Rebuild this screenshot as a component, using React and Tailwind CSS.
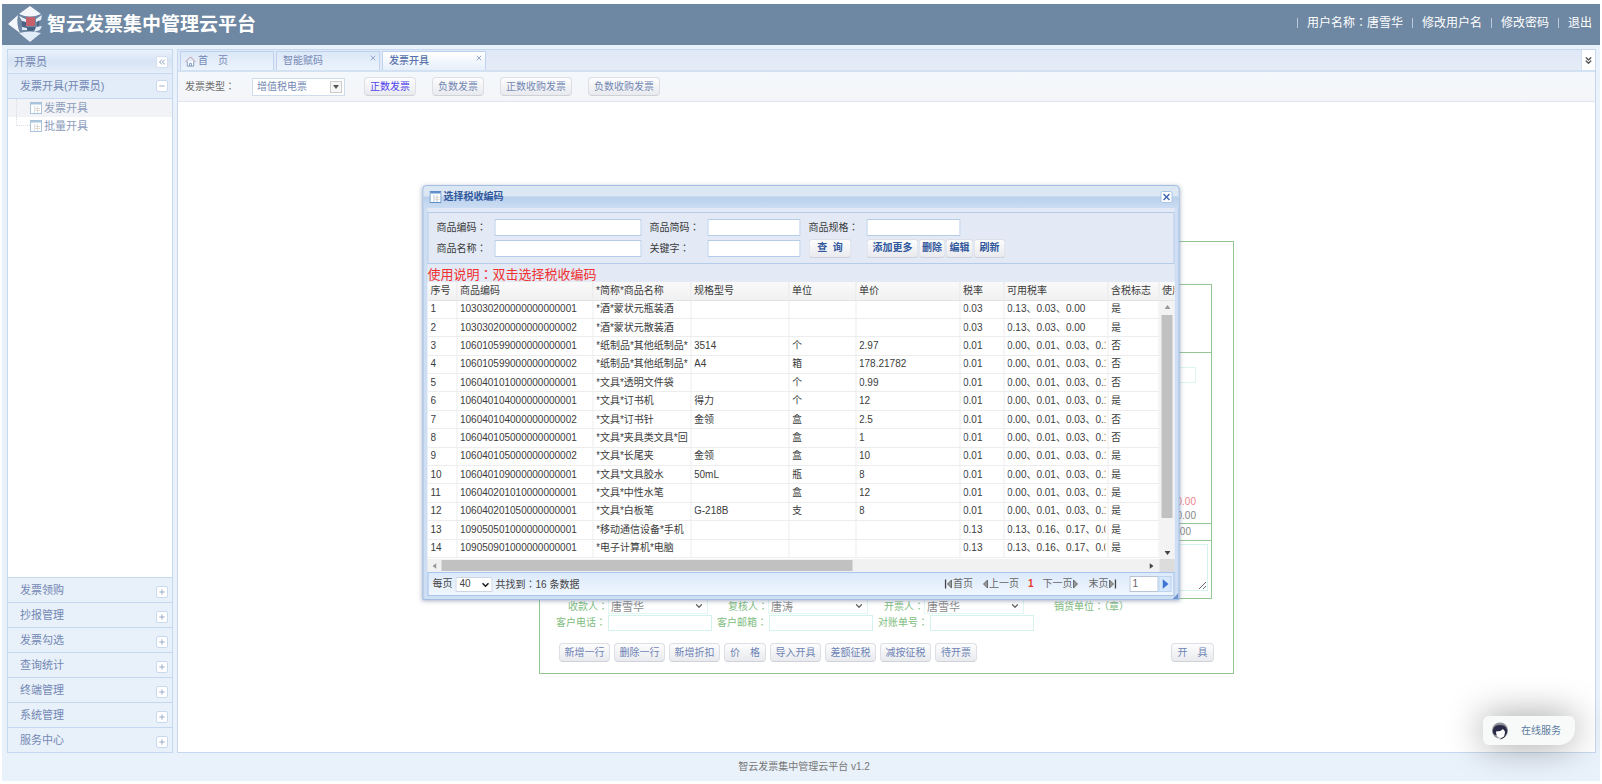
import React, { useState } from 'react';
import { ChevronDown, ChevronsDown, ChevronsLeft, Minus, Plus, X } from 'lucide-react';

const menus = ['发票领购', '抄报管理', '发票勾选', '查询统计', '终端管理', '系统管理', '服务中心'];

const goods = [
    ['1', '103030200000000000001', '*酒*蒙状元瓶装酒', '', '', '', '0.03', '0.13、0.03、0.00', '是'],
    ['2', '103030200000000000002', '*酒*蒙状元散装酒', '', '', '', '0.03', '0.13、0.03、0.00', '是'],
    ['3', '106010599000000000001', '*纸制品*其他纸制品*', '3514', '个', '2.97', '0.01', '0.00、0.01、0.03、0.1', '否'],
    ['4', '106010599000000000002', '*纸制品*其他纸制品*', 'A4', '箱', '178.21782', '0.01', '0.00、0.01、0.03、0.1', '否'],
    ['5', '106040101000000000001', '*文具*透明文件袋', '', '个', '0.99', '0.01', '0.00、0.01、0.03、0.1', '否'],
    ['6', '106040104000000000001', '*文具*订书机', '得力', '个', '12', '0.01', '0.00、0.01、0.03、0.1', '是'],
    ['7', '106040104000000000002', '*文具*订书针', '金领', '盒', '2.5', '0.01', '0.00、0.01、0.03、0.1', '否'],
    ['8', '106040105000000000001', '*文具*夹具类文具*回', '', '盒', '1', '0.01', '0.00、0.01、0.03、0.1', '否'],
    ['9', '106040105000000000002', '*文具*长尾夹', '金领', '盒', '10', '0.01', '0.00、0.01、0.03、0.1', '是'],
    ['10', '106040109000000000001', '*文具*文具胶水', '50mL', '瓶', '8', '0.01', '0.00、0.01、0.03、0.1', '是'],
    ['11', '106040201010000000001', '*文具*中性水笔', '', '盒', '12', '0.01', '0.00、0.01、0.03、0.1', '是'],
    ['12', '106040201050000000001', '*文具*白板笔', 'G-218B', '支', '8', '0.01', '0.00、0.01、0.03、0.1', '是'],
    ['13', '109050501000000000001', '*移动通信设备*手机', '', '', '', '0.13', '0.13、0.16、0.17、0.0', '是'],
    ['14', '109050901000000000001', '*电子计算机*电脑', '', '', '', '0.13', '0.13、0.16、0.17、0.0', '是'],
];

const columns = [
    { title: '序号', width: 'w-[29px]' },
    { title: '商品编码', width: 'w-[136px]' },
    { title: '*简称*商品名称', width: 'w-[98px]' },
    { title: '规格型号', width: 'w-[98px]' },
    { title: '单位', width: 'w-[67px]' },
    { title: '单价', width: 'w-[104px]' },
    { title: '税率', width: 'w-[44px]' },
    { title: '可用税率', width: 'w-[104px]' },
    { title: '含税标志', width: 'w-[51px]' },
    { title: '使用', width: 'w-[16px]' },
];

// full-width colon centred in its box
const Colon = () => <span className="font-['Noto_Sans_CJK_TC',sans-serif]">：</span>;

function Logo() {
    return (
        <svg viewBox="0 0 36 38" className="h-[38px] w-9 shrink-0" aria-hidden="true">
            <path d="M22 0 L33 8 Q22 13 11 8 Z" fill="#f3f7fc" />
            <path d="M10 9 L0 18 L12 27 Q8 18 10 9 Z" fill="#f3f7fc" />
            <path d="M22 36 L11 27 Q22 24 33 27 Z" fill="#e2ecf9" />
            <path d="M15 11 Q12 18 16 23 Q22 27 29 23 Q32 20 31 12 L29 12 V21 H18 V12 Z" fill="#4a6183" />
            <path d="M11 10 L18 13 V16 L14 15 Z M34 9 L28 13 V16 L33 14 Z" fill="#e6eefa" />
            <path d="M28 21 L34 20 L32 24 L26 26 Z M14 21 L19 22 V24 L14 24 Z" fill="#dfe9f7" />
            <rect x="18" y="11" width="9" height="9" rx="1" fill="#c65f6c" />
        </svg>
    );
}

function GridIcon({ tone }) {
    return (
        <svg viewBox="0 0 12 12" className="h-3 w-3 shrink-0" aria-hidden="true">
            <rect x="0.5" y="0.5" width="11" height="11" fill="#fff" stroke={tone} />
            <path d="M1 1.500 h10" stroke={tone} strokeWidth="2" />
            <path d="M4.500 4 v7 M7.500 4 v7" stroke={tone} strokeOpacity="0.6" strokeWidth="0.8" />
            <path d="M5 6.500 h5 M5 8.500 h5" stroke="#e3d3bd" strokeWidth="0.8" />
        </svg>
    );
}

function Arrow({ left, bar }) {
    return (
        <svg viewBox="0 0 8 10" className="h-[10px] w-2" aria-hidden="true">
            <g transform={left ? undefined : 'translate(8 0) scale(-1 1)'}>
                {bar && <path d="M1 0.5 v9" stroke="#444" strokeWidth="1.4" />}
                <path d="M7 1 v8 L3 5 Z" fill="#999" stroke="#555" strokeWidth="0.8" />
            </g>
        </svg>
    );
}

function ToolButton({ children, className }) {
    return (
        <button
            type="button"
            className={`h-[19px] shrink-0 rounded-sm border border-[#dcdfe6] border-b-[#cfd2d8] bg-linear-to-b from-[#fdfdfd] to-[#e9eaee] text-center whitespace-pre ${className}`}
        >
            {children}
        </button>
    );
}

function PersonSelect({ id, label, name, className }) {
    return (
        <div className={`flex items-center ${className}`}>
            <label htmlFor={id} className="w-[52px] shrink-0 text-right text-[#80bd80]">{label}<Colon /></label>
            <div className="relative w-[100px] shrink-0">
                <select id={id} className="block h-[15px] w-full appearance-none border border-[#e0f6f1] bg-white pl-0.5 text-[11px] leading-3 text-[#8b8b8b]">
                    <option>{name}</option>
                </select>
                <ChevronDown className="pointer-events-none absolute top-0.5 right-1 h-[10px] w-[10px] text-[#666]" strokeWidth={3} />
            </div>
        </div>
    );
}

function TextField({ id, label }) {
    return (
        <div className="flex items-center">
            <label htmlFor={id} className="w-[52px] shrink-0 text-[#80bd80]">{label}<Colon /></label>
            <input id={id} type="text" className="h-4 w-[104px] shrink-0 border border-[#d3f3ee] bg-white px-1" />
        </div>
    );
}

function Sidebar() {
    return (
        <aside className="flex w-[166px] shrink-0 flex-col border border-[#c6d8ef] bg-white text-[11px] text-[#7388b3]">
            <div className="flex h-6 shrink-0 items-center justify-between border-b border-[#c6d8ef] bg-linear-to-b from-[#e9f1fb] via-[#d8e4f4] to-[#e6effa] pr-1 pl-1.5">
                <span>开票员</span>
                <button type="button" aria-label="折叠" className="flex h-3 w-3 items-center justify-center rounded-xs border border-[#d3dfef] bg-white">
                    <ChevronsLeft className="h-[10px] w-[10px]" />
                </button>
            </div>
            <div className="flex h-[25px] shrink-0 items-center justify-between border-b border-[#c6d8ef] bg-[#e3edf9] pr-1 pl-3">
                <span>发票开具(开票员)</span>
                <button type="button" aria-label="收起" className="flex h-3 w-3 items-center justify-center rounded-xs border border-[#c9d9ee] bg-white">
                    <Minus className="h-2 w-2" />
                </button>
            </div>
            <ul className="min-h-0 flex-1 text-[#8d9dbd]">
                <li className="flex h-[18px] items-center bg-[#f1f3f6] pl-2">
                    <span className="h-full w-3.5 border-l border-dotted border-[#d8dde6]" />
                    <GridIcon tone="#a9c4dc" />
                    <a href="#invoice" className="ml-0.5">发票开具</a>
                </li>
                <li className="flex h-[18px] items-center pl-2">
                    <span className="w-3.5 self-start border-b border-l border-dotted border-[#d8dde6] pt-2" />
                    <GridIcon tone="#a9c4dc" />
                    <a href="#batch" className="ml-0.5">批量开具</a>
                </li>
            </ul>
            {menus.map((menu) => (
                <div key={menu} className="flex h-[25px] shrink-0 items-center justify-between border-t border-[#c6d8ef] bg-[#e8f0fa] pr-1 pl-3">
                    <span>{menu}</span>
                    <button type="button" aria-label={`展开${menu}`} className="mt-1 flex h-3 w-3 items-center justify-center rounded-xs border border-[#c9d9ee] bg-white">
                        <Plus className="h-2 w-2" />
                    </button>
                </div>
            ))}
        </aside>
    );
}

function InvoiceForm() {
    return (
        <section className="mx-auto mt-[139px] flex h-[433px] w-[695px] shrink-0 flex-col border border-[#95c795] bg-white pt-[42px]">
            <div className="mx-[21px] flex h-[315px] flex-col border border-[#95c795] text-right">
                <div className="h-[68px] border-b border-[#95c795]" />
                <div className="flex flex-1 flex-col justify-between pt-[14px] pr-[15px]">
                    <input type="text" aria-label="金额" className="h-4 w-24 self-end border border-[#dff5f1]" />
                    <div className="leading-[14px]">
                        <p className="text-[#f0848c]">0.00</p>
                        <p className="text-[#888]">0.00</p>
                    </div>
                </div>
                <p className="h-[18px] border-y border-[#95c795] pr-5 leading-4 text-[#888]">0.00</p>
                <div className="h-[57px] p-[3px]">
                    <textarea aria-label="备注" className="block h-[47px] w-full border border-[#d3f3ee]" />
                </div>
            </div>
            <div className="flex h-[15px] shrink-0 items-center pl-4">
                <PersonSelect id="payee" label="收款人" name="唐雪华" />
                <PersonSelect id="checker" label="复核人" name="唐涛" className="ml-2" />
                <PersonSelect id="drawer" label="开票人" name="唐雪华" className="ml-1" />
                <span className="ml-[30px] whitespace-nowrap text-[#80bd80]">销货单位<Colon />（章）</span>
            </div>
            <div className="flex shrink-0 items-center gap-[5px] pl-4">
                <TextField id="phone" label="客户电话" />
                <TextField id="mail" label="客户邮箱" />
                <TextField id="bill" label="对账单号" />
            </div>
            <div className="mt-3 flex shrink-0 gap-1 px-[19px] text-[#6e84b5]">
                <ToolButton className="w-[51px]">新增一行</ToolButton>
                <ToolButton className="w-[51px]">删除一行</ToolButton>
                <ToolButton className="w-[51px]">新增折扣</ToolButton>
                <ToolButton className="w-[42px]">价　格</ToolButton>
                <ToolButton className="w-[51px]">导入开具</ToolButton>
                <ToolButton className="w-[51px]">差额征税</ToolButton>
                <ToolButton className="w-[51px]">减按征税</ToolButton>
                <ToolButton className="w-[42px]">待开票</ToolButton>
                <ToolButton className="ml-auto w-[43px]">开　具</ToolButton>
            </div>
        </section>
    );
}

function GoodsTable() {
    return (
        <div className="relative h-[277px] overflow-hidden bg-white">
            <table className="h-[276px] w-full table-fixed border-collapse text-left leading-3 text-[#3c3c3c]">
                <thead>
                    <tr className="h-[18px] bg-linear-to-b from-[#fafafa] to-[#f0f1f2]">
                        {columns.map((col) => (
                            <th key={col.title} className={`${col.width} overflow-hidden border-r border-b border-[#e2e2e2] p-0 pl-[3px] font-normal whitespace-nowrap last:border-r-0`}>
                                {col.title}
                            </th>
                        ))}
                    </tr>
                </thead>
                <tbody>
                    {goods.map((row) => (
                        <tr key={row[1]}>
                            {row.map((cell, i) => (
                                <td key={i} className="border-r border-b border-[#ededed] p-0 pl-[3px] whitespace-nowrap">
                                    <div className="mr-0.5 overflow-hidden">{cell}</div>
                                </td>
                            ))}
                            <td className="p-0" />
                        </tr>
                    ))}
                </tbody>
            </table>
            {/* vertical scroll bar over the last column */}
            <div className="absolute top-[19px] right-0 bottom-0 flex w-[15px] flex-col items-center justify-between bg-[#f3f3f3] py-1">
                <svg viewBox="0 0 6 4" className="h-1 w-1.5"><path d="M0 4 L3 0 L6 4 Z" fill="#999" /></svg>
                <div className="mb-auto mt-1.5 h-[203px] w-[11px] bg-[#c1c1c1]" />
                <svg viewBox="0 0 6 4" className="h-1 w-1.5"><path d="M0 0 L3 4 L6 0 Z" fill="#444" /></svg>
            </div>
        </div>
    );
}

function CodeDialog({ onClose }) {
    const [pageSize, setPageSize] = useState('40');
    const inputClass = 'h-[17px] border border-[#b5cde9] bg-white px-1';

    return (
        <div role="dialog" aria-label="选择税收编码" className="absolute top-[185px] left-1/2 flex w-[757px] -translate-x-1/2 flex-col rounded-t border border-[#a3bfe3] bg-[#cfdff3] px-1 pb-[3px] shadow-[0_1px_4px_rgba(80,100,140,0.5)]">
            <div className="-mx-1 flex h-[22px] items-center rounded-t bg-linear-to-b from-[#dbe7f3] from-45% via-[#b9d0ec] via-50% to-[#cbddf3] px-1.5 font-bold text-[#31589c]">
                <GridIcon tone="#5f8fc9" />
                <h2 className="ml-0.5">选择税收编码</h2>
                <button type="button" aria-label="关闭" onClick={onClose} className="ml-auto flex h-3 w-3 items-center justify-center rounded-xs border border-[#aac4e4] bg-white">
                    <X className="h-[10px] w-[10px] text-[#4a6cb0]" strokeWidth={4} />
                </button>
            </div>
            <div className="bg-[#e3eaf5] pt-1">
                <form className="flex h-[52px] flex-col justify-center gap-[3px] border border-[#b5cbea] pl-2 text-[#3a3a3a]">
                    <div className="flex items-center">
                        <label htmlFor="code" className="w-[58px]">商品编码<Colon /></label>
                        <input id="code" type="text" className={`${inputClass} w-[147px]`} />
                        <label htmlFor="short" className="ml-2 w-[58px]">商品简码<Colon /></label>
                        <input id="short" type="text" className={`${inputClass} w-[93px]`} />
                        <label htmlFor="spec" className="ml-2 w-[58px]">商品规格<Colon /></label>
                        <input id="spec" type="text" className={`${inputClass} w-[94px]`} />
                    </div>
                    <div className="flex items-center">
                        <label htmlFor="name" className="w-[58px]">商品名称<Colon /></label>
                        <input id="name" type="text" className={`${inputClass} w-[147px]`} />
                        <label htmlFor="keyword" className="ml-2 w-[58px]">关键字<Colon /></label>
                        <input id="keyword" type="text" className={`${inputClass} w-[93px]`} />
                        <div className="ml-2 flex font-bold text-[#31589c]">
                            <ToolButton className="mr-[15px] w-[43px]">查  询</ToolButton>
                            <ToolButton className="w-[52px]">添加更多</ToolButton>
                            <ToolButton className="w-[27px]">删除</ToolButton>
                            <ToolButton className="w-[28px]">编辑</ToolButton>
                            <ToolButton className="w-[32px]">刷新</ToolButton>
                        </div>
                    </div>
                </form>
                <p className="h-[18px] text-[13px] leading-5 text-[#f03030]">使用说明<Colon />双击选择税收编码</p>
            </div>
            <GoodsTable />
            <div className="flex h-[13px] items-center bg-[#f1f1f1]">
                <svg viewBox="0 0 4 6" className="mx-[5px] h-1.5 w-1"><path d="M4 0 L0 3 L4 6 Z" fill="#999" /></svg>
                <div className="h-[11px] w-[411px] bg-[#c1c1c1]" />
                <svg viewBox="0 0 4 6" className="mr-1.5 ml-auto h-1.5 w-1"><path d="M0 0 L4 3 L0 6 Z" fill="#444" /></svg>
                <div className="h-full w-[15px] bg-[#dcdcdc]" />
            </div>
            <div className="flex h-6 items-center border border-[#a9c5ea] bg-linear-to-b from-[#ddeafb] to-[#eff6fe] pl-1 text-[#444]">
                <label htmlFor="pagesize">每页</label>
                <div className="relative mx-[3px]">
                    <select
                        id="pagesize"
                        value={pageSize}
                        onChange={(e) => setPageSize(e.target.value)}
                        className="block h-[15px] w-[37px] appearance-none border border-[#cdd7e3] bg-white pl-[3px] leading-3"
                    >
                        <option>20</option>
                        <option>40</option>
                    </select>
                    <ChevronDown className="pointer-events-none absolute top-[3px] right-0.5 h-[10px] w-[10px] text-[#222]" strokeWidth={4} />
                </div>
                <span>共找到<Colon />16 条数据</span>
                <div className="ml-auto flex items-center text-[#666]">
                    <a href="#first" className="flex items-center"><Arrow left bar />首页</a>
                    <a href="#prev" className="ml-2 flex items-center"><Arrow left />上一页</a>
                    <span className="mx-[9px] font-bold text-[#e83a2a]">1</span>
                    <a href="#next" className="flex items-center">下一页<Arrow /></a>
                    <a href="#last" className="ml-2 flex items-center">末页<Arrow bar /></a>
                    <input type="text" aria-label="页码" defaultValue="1" className="ml-[13px] h-4 w-[29px] border border-[#b8c4d4] bg-white px-0.5" />
                    <button type="button" aria-label="跳转" className="mr-0.5 flex h-4 w-[13px] items-center justify-center border border-[#bcd3f1] bg-[#d8e8fb]">
                        <svg viewBox="0 0 6 10" className="h-[10px] w-1.5"><path d="M0 0 L6 5 L0 10 Z" fill="#3f73d8" /></svg>
                    </button>
                </div>
            </div>
            <svg viewBox="0 0 6 6" className="absolute right-0 bottom-0 h-1.5 w-1.5" aria-hidden="true">
                <path d="M6 0 V6 H0 Z" fill="#6f93cf" />
            </svg>
        </div>
    );
}

export default function App() {
    const [dialogOpen, setDialogOpen] = useState(true);

    return (
        <div className="relative flex h-screen flex-col bg-white px-0.5 pt-1 pb-[3px] font-['Liberation_Sans','Noto_Sans_CJK_SC',sans-serif] text-[10px] leading-4">
            <header className="flex h-[41px] shrink-0 items-center bg-[#6e87a2] pr-2 pl-1.5 text-white">
                <Logo />
                <h1 className="ml-[3px] text-[19px] leading-6 font-bold">智云发票集中管理云平台</h1>
                <nav className="ml-auto flex items-center gap-[9px] pb-1 text-[12px]">
                    <span className="h-[10px] border-l border-[#b9c7d6]" />
                    <span>用户名称<Colon />唐雪华</span>
                    <span className="h-[10px] border-l border-[#b9c7d6]" />
                    <a href="#rename">修改用户名</a>
                    <span className="h-[10px] border-l border-[#b9c7d6]" />
                    <a href="#password">修改密码</a>
                    <span className="h-[10px] border-l border-[#b9c7d6]" />
                    <a href="#logout">退出</a>
                </nav>
            </header>

            <div className="flex min-h-0 flex-1 gap-1 bg-[#e9f1fa] pt-1 pr-1 pl-[5px]">
                <Sidebar />
                <main className="flex min-w-0 flex-1 flex-col border border-[#c6d8ef] bg-white">
                    <div className="flex h-[22px] shrink-0 items-end gap-0.5 border-b-2 border-[#d3e2f3] bg-linear-to-b from-[#dfe8f6] to-[#e6ebf7] pl-0.5 text-[#7388b3]">
                        <a href="#home" className="flex h-[19px] w-[94px] items-center border border-b-0 border-[#bcd2ee] bg-linear-to-b from-[#dce8f8] to-[#ecf3fc] px-1">
                            <svg viewBox="0 0 12 12" className="mr-0.5 h-[11px] w-[11px]" aria-hidden="true">
                                <path d="M2.5 6 V11 H9.5 V6" fill="#fff" stroke="#7b91bd" />
                                <path d="M0.5 6.5 L6 1 L11.5 6.5" fill="none" stroke="#b98a94" />
                                <path d="M5 11 V8 H7 V11" fill="none" stroke="#7b91bd" />
                            </svg>
                            首　页
                        </a>
                        <a href="#code" className="flex h-[19px] w-[104px] items-center justify-between border border-b-0 border-[#bcd2ee] bg-linear-to-b from-[#dce8f8] to-[#ecf3fc] pr-0.5 pl-1.5">
                            智能赋码
                            <X className="mt-0.5 h-2 w-2 self-start text-[#93a7c9]" strokeWidth={3} />
                        </a>
                        <a href="#invoice" className="flex h-[19px] w-[104px] items-center justify-between border border-b-0 border-[#bcd2ee] bg-linear-to-b from-white to-[#e6effa] pr-0.5 pl-1.5 font-medium text-[#5a74ab]">
                            发票开具
                            <X className="mt-0.5 h-2 w-2 self-start text-[#93a7c9]" strokeWidth={3} />
                        </a>
                        <button type="button" aria-label="更多" className="ml-auto flex h-full w-[14px] items-center justify-center border-l border-[#d3e2f3] bg-white text-[#555]">
                            <ChevronsDown className="h-[11px] w-[11px]" strokeWidth={3} />
                        </button>
                    </div>
                    <div className="flex h-[30px] shrink-0 items-center border-b border-[#dfe6ef] bg-linear-to-b from-[#f4f8fb] to-[#f4f5f9] pl-[7px] text-[#7388b3]">
                        <label htmlFor="type" className="w-[67px] text-[#6b6b6b]">发票类型<Colon /></label>
                        <div className="relative mr-[19px]">
                            <select id="type" className="block h-[18px] w-[93px] appearance-none border border-[#cfdcec] bg-white pl-1">
                                <option>增值税电票</option>
                            </select>
                            <span className="pointer-events-none absolute top-[3px] right-[3px] flex h-3 w-3 items-center justify-center border border-[#ccc] bg-[#f6f6f6]">
                                <svg viewBox="0 0 6 4" className="h-1 w-1.5"><path d="M0 0 H6 L3 4 Z" fill="#555" /></svg>
                            </span>
                        </div>
                        <div className="flex gap-4">
                            <ToolButton className="w-[52px] text-[#4f42ee]">正数发票</ToolButton>
                            <ToolButton className="w-[52px]">负数发票</ToolButton>
                            <ToolButton className="w-[72px]">正数收购发票</ToolButton>
                            <ToolButton className="w-[72px]">负数收购发票</ToolButton>
                        </div>
                    </div>
                    <div className="min-h-0 flex-1">
                        <div className="flex">
                            <InvoiceForm />
                        </div>
                    </div>
                </main>
            </div>

            <footer className="h-7 shrink-0 bg-[#e9f1fa] pt-1.5 pl-1.5 text-center text-[#777]">智云发票集中管理云平台 v1.2</footer>

            {dialogOpen && <CodeDialog onClose={() => setDialogOpen(false)} />}

            <button type="button" className="absolute right-[27px] bottom-[39px] flex h-[29px] w-[92px] items-center rounded-md rounded-br-2xl bg-[#f8faf9] pl-2 text-[#5b7ba0] shadow-[0_0_36px_rgba(0,0,0,0.4)]">
                <svg viewBox="0 0 18 18" className="h-[18px] w-[18px]" aria-hidden="true">
                    <circle cx="9" cy="8.500" r="8" fill="#8d9099" />
                    <path d="M2 11 Q1 3 9 3 Q17 3 16 11 L14 13 H4 Z" fill="#2b2b47" />
                    <path d="M5 9.500 Q10 9.500 12 7 L14 9.500 Q14 15.500 9.500 16 Q5 15.500 5 9.500 Z" fill="#fff" />
                    <path d="M15 12 Q14 16 9.500 17" fill="none" stroke="#2b2b47" />
                </svg>
                <span className="ml-3">在线服务</span>
            </button>
        </div>
    );
}
